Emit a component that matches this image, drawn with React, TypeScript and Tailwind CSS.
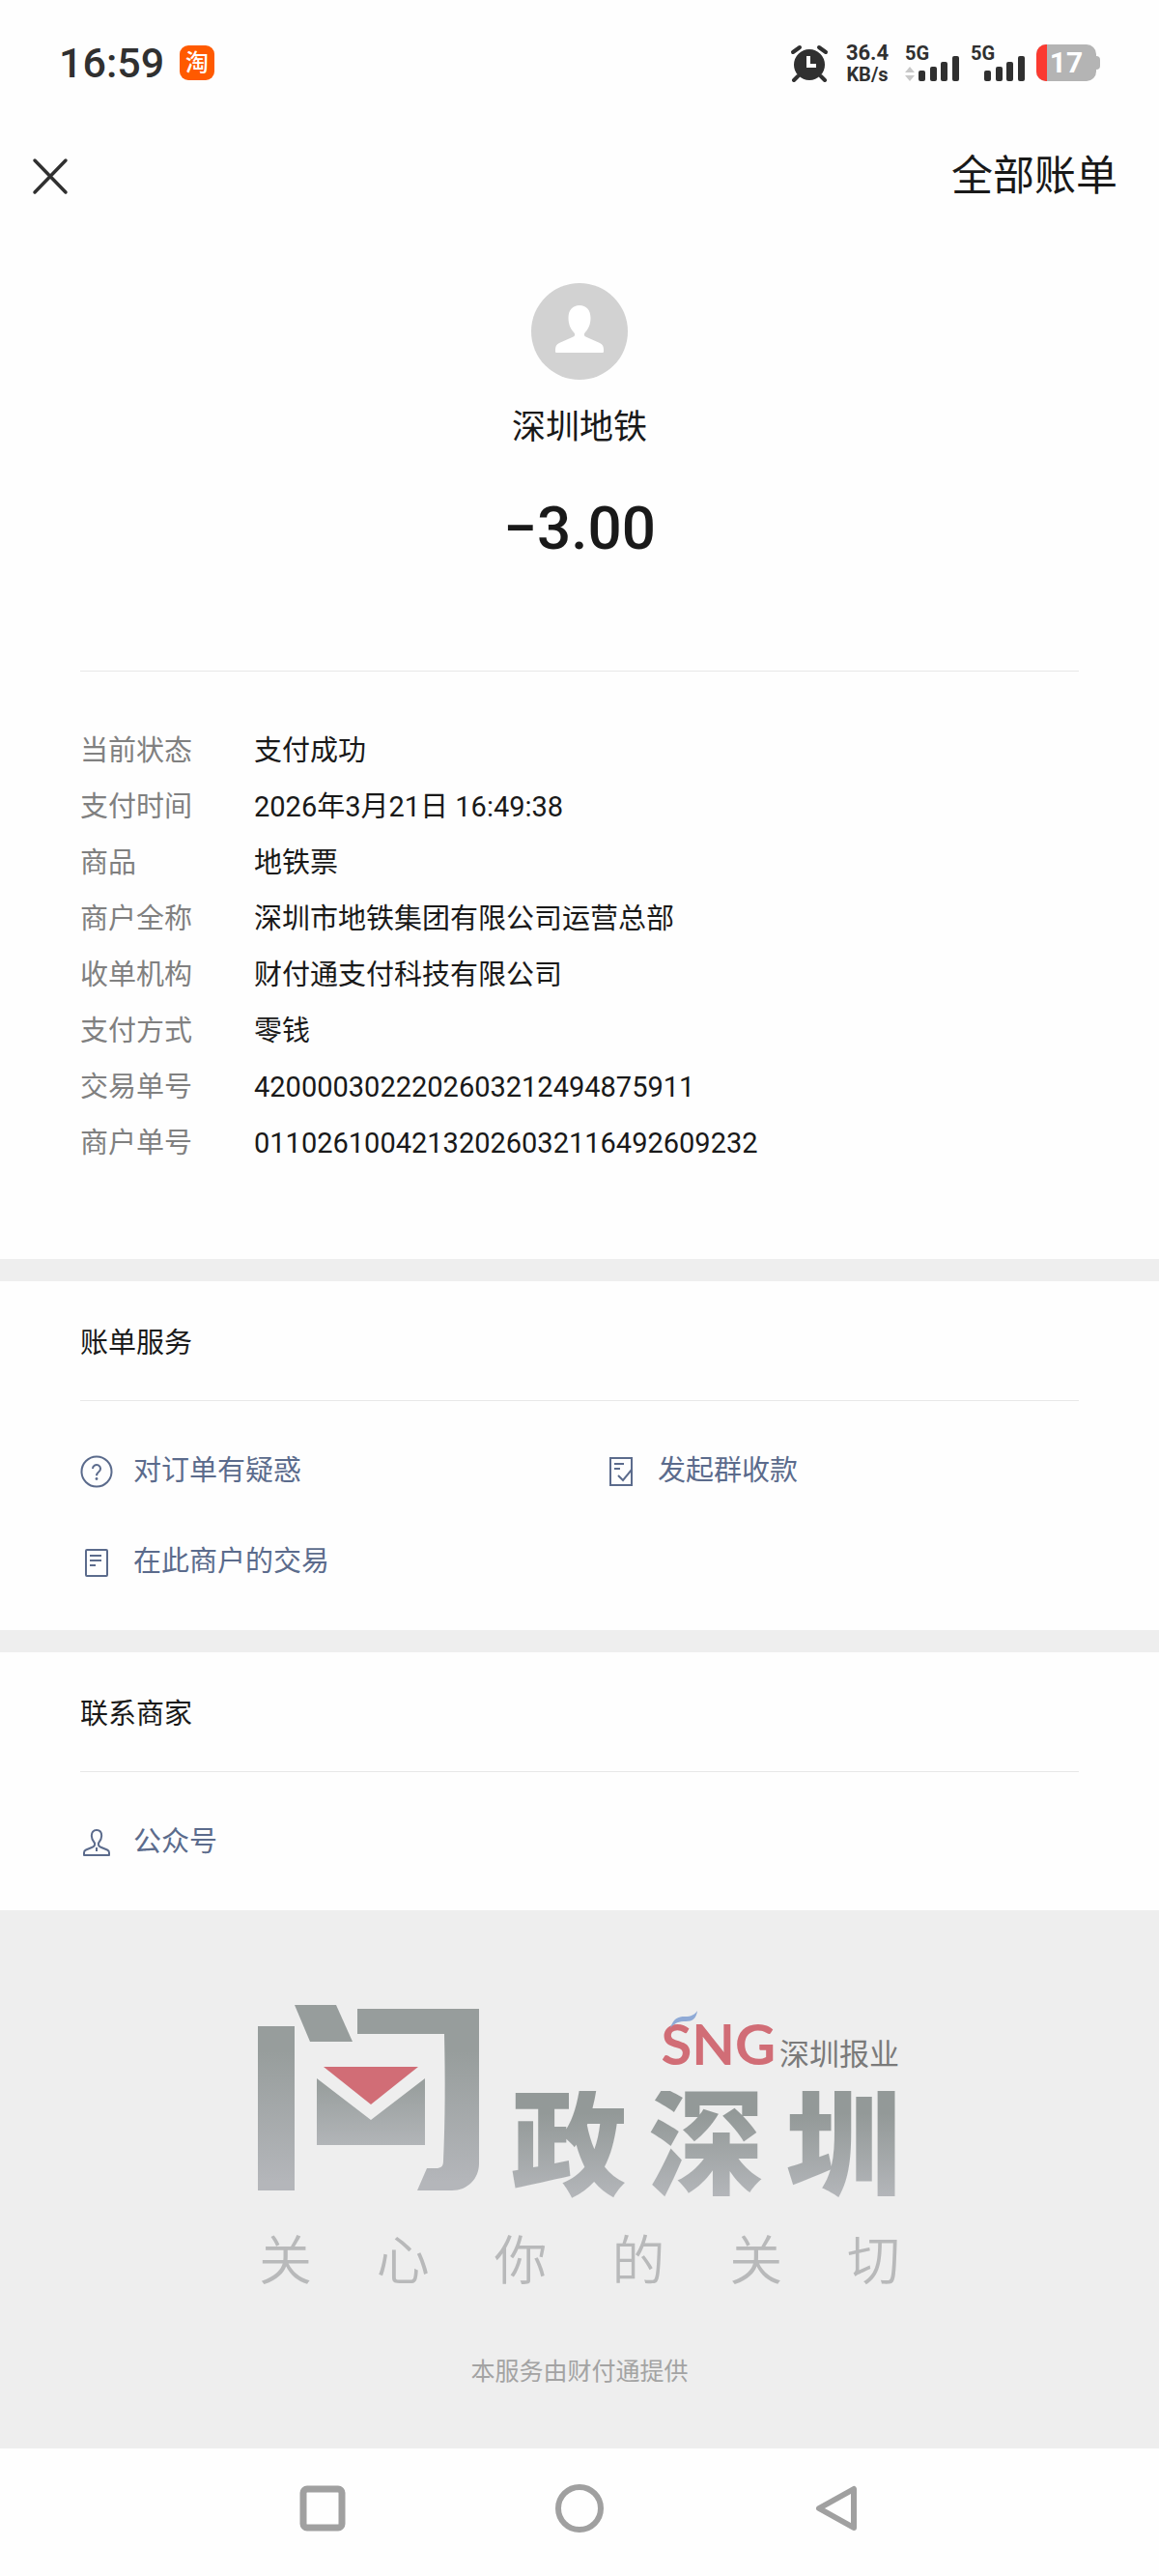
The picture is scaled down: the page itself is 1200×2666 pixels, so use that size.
import type { ReactNode } from 'react'

interface DetailRow {
  label: string
  value: string
}

interface ServiceLinkProps {
  icon: ReactNode
  children: ReactNode
}

const details: DetailRow[] = [
  { label: '当前状态', value: '支付成功' },
  { label: '支付时间', value: '2026年3月21日 16:49:38' },
  { label: '商品', value: '地铁票' },
  { label: '商户全称', value: '深圳市地铁集团有限公司运营总部' },
  { label: '收单机构', value: '财付通支付科技有限公司' },
  { label: '支付方式', value: '零钱' },
  { label: '交易单号', value: '4200003022202603212494875911' },
  { label: '商户单号', value: '01102610042132026032116492609232' },
]

const slogan = ['关', '心', '你', '的', '关', '切']

function AlarmIcon() {
  return (
    <svg className="h-10 w-10" viewBox="0 0 40 40" fill="none" aria-hidden="true">
      <circle cx="20" cy="22" r="16" fill="#303030" />
      <path d="M3 9l7-5M37 9l-7-5" stroke="#303030" strokeWidth="4" strokeLinecap="round" />
      <path d="M8 34l-4 4M32 34l4 4" stroke="#303030" strokeWidth="4" strokeLinecap="round" />
      <path d="M19 13v10h8" stroke="#fff" strokeWidth="4" />
    </svg>
  )
}

function Signal({ transfer = false }: { transfer?: boolean }) {
  return (
    <div className="relative h-10 w-14">
      <span className="absolute top-0 left-0 text-[20px] leading-5 font-bold">5G</span>
      <svg className="h-10 w-14" viewBox="0 0 56 40" fill="#303030" aria-hidden="true">
        {transfer && <path d="M0 30l5-6 5 6zM0 33l5 6 5-6z" fill="#c8c8c8" />}
        <rect x="14" y="28" width="7" height="11" rx="2" />
        <rect x="26" y="24" width="7" height="15" rx="2" />
        <rect x="37" y="19" width="7" height="20" rx="2" />
        <rect x="49" y="13" width="7" height="26" rx="2" />
      </svg>
    </div>
  )
}

function Battery() {
  return (
    <div className="flex items-center">
      <div className="relative flex h-[38px] w-[62px] items-center justify-center overflow-hidden rounded-[10px] bg-[#b4b4b4]">
        <div className="absolute inset-y-0 left-0 w-[11px] bg-[#fb3a30]" />
        <span className="text-[30px] leading-8 font-bold text-white">17</span>
      </div>
      <div className="h-[14px] w-1 rounded-r-sm bg-[#b4b4b4]" />
    </div>
  )
}

function QuestionIcon() {
  return (
    <svg className="h-[34px] w-[34px]" viewBox="0 0 34 34" fill="none" stroke="currentColor" strokeWidth="2" aria-hidden="true">
      <circle cx="17" cy="17" r="15.5" />
      <path d="M13 14a4 4 0 1 1 6.300 3.200c-1.600 1.100-2.300 2-2.300 4" />
      <circle cx="17" cy="24.5" r="1.4" fill="currentColor" stroke="none" />
    </svg>
  )
}

function GroupBillIcon() {
  return (
    <svg className="h-[34px] w-[34px]" viewBox="0 0 34 34" fill="none" stroke="currentColor" strokeWidth="2" aria-hidden="true">
      <path d="M28 18V3H6v28h22V18" />
      <path d="M10 9h10M10 14h6" />
      <path d="M14 21l5 5 9-11" />
    </svg>
  )
}

function BillIcon() {
  return (
    <svg className="h-[34px] w-[34px]" viewBox="0 0 34 34" fill="none" stroke="currentColor" strokeWidth="2" aria-hidden="true">
      <rect x="6" y="4" width="22" height="27" rx="1" />
      <path d="M10 10h12M10 15h12M10 20h6" />
    </svg>
  )
}

function AccountIcon() {
  return (
    <svg className="h-[34px] w-[34px]" viewBox="0 0 34 34" fill="none" stroke="currentColor" strokeWidth="2" strokeLinejoin="round" aria-hidden="true">
      <path d="M17 4c-3.300 0-5.200 2.500-5.200 6 0 3.600 1.500 5.600 3.200 7.500.6 2.500-.6 3.600-3 4.500l-6 2.500c-1.300.6-2 1.500-2 3V30h26v-2.500c0-1.500-.7-2.400-2-3L22 22c-2.400-.9-3.600-2-3-4.500 1.700-1.900 3.200-3.900 3.200-7.500 0-3.500-1.900-6-5.200-6z" />
      <path d="M17 22v4" />
    </svg>
  )
}

function ServiceLink({ icon, children }: ServiceLinkProps) {
  return (
    <a href="#" className="flex h-[58px] items-center gap-[21px] text-[29px] text-[#5b6b8c]">
      {icon}
      <span>{children}</span>
    </a>
  )
}

// 门框加信封的图形标志
function MailMark() {
  return (
    <svg className="h-[194px] w-[230px]" viewBox="0 0 230 194" role="img" aria-label="问">
      <defs>
        <linearGradient id="frame" gradientUnits="userSpaceOnUse" x1="0" y1="0" x2="0" y2="194">
          <stop offset="0.25" stopColor="#979d9c" />
          <stop offset="0.95" stopColor="#b4b6ba" />
        </linearGradient>
        <linearGradient id="envelope" x1="0" y1="0" x2="0" y2="1">
          <stop offset="0.1" stopColor="#999f9e" />
          <stop offset="1" stopColor="#b2b5b8" />
        </linearGradient>
      </defs>
      <g fill="url(#frame)">
        <path d="M0 23h38v170H0z" />
        <path d="M38 1h43l17 38H54z" />
        <path d="M103 5h126v160c0 16-12 28-28 28h-36l10-23h9c6 0 8-2 8-8 2-43 2-85 1-131h-90z" />
      </g>
      <path d="M61 77l56 43 56-43v69H61z" fill="url(#envelope)" />
      <path d="M68 65h98l-49 39z" fill="#d16d76" />
    </svg>
  )
}

function Sponsor() {
  return (
    <div className="flex items-baseline justify-end gap-1 pr-0.5">
      <span className="relative font-[Lato] text-[58px] leading-[54px] font-bold text-[#d16d76]">
        SNG
        <svg className="absolute -top-2 left-2 h-5 w-8" viewBox="0 0 32 20" aria-hidden="true">
          <path d="M2 19C5 9 10 7 17 7c7 0 10-2 13-6-1 8-5 11-12 11-7 0-11 1-16 7z" fill="#8faad6" />
        </svg>
      </span>
      <span className="text-[31px] leading-[54px] text-[#7a7a7a]">深圳报业</span>
    </div>
  )
}

export default function App() {
  return (
    <div className="min-h-screen bg-[#fefefe] font-[Roboto,'Noto_Sans_CJK_SC',sans-serif] text-[#191919]">
      <div className="flex h-[130px] items-center justify-between px-[61px] text-[#303030]">
        <div className="flex items-center gap-4">
          <span className="text-[43px] leading-none font-medium">16:59</span>
          <span className="flex h-9 w-9 items-center justify-center rounded-[9px] bg-[#ff5a00] text-[24px] leading-none font-medium text-white">
            淘
          </span>
        </div>
        <div className="flex items-center">
          <AlarmIcon />
          <div className="mr-[15px] ml-4 flex w-12 flex-col items-center font-bold">
            <span className="text-[22px] leading-6">36.4</span>
            <span className="text-[20px] leading-5">KB/s</span>
          </div>
          <div className="mr-3 flex gap-3">
            <Signal transfer />
            <Signal />
          </div>
          <Battery />
        </div>
      </div>

      <header className="flex h-[100px] items-center justify-between pt-[3px] pr-[43px] pl-[32px]">
        <button type="button" aria-label="关闭">
          <svg className="h-10 w-10" viewBox="0 0 40 40" stroke="#303030" strokeWidth="3.500" strokeLinecap="round" aria-hidden="true">
            <path d="M4 4l32 33M36 4L4 37" />
          </svg>
        </button>
        <button type="button" className="text-[43px] leading-[60px]">全部账单</button>
      </header>

      <main>
        <section className="px-[83px] pt-[63px] pb-[91px]">
          <div className="flex flex-col items-center">
            <svg className="h-[100px] w-[100px]" viewBox="0 0 100 100" aria-hidden="true">
              <circle cx="50" cy="50" r="50" fill="#d2d2d2" />
              <path
                d="M50 23c-7 0-11.500 5-11.500 13 0 7 2.500 11.500 6 15.500 1.500 2 .5 3.500-2 4.500L29 62c-3 1.500-4 3.500-4 7v1.500c0 1 .5 1.500 1.500 1.500h47c1 0 1.500-.5 1.500-1.500V69c0-3.500-1-5.500-4-7l-13.500-6c-2.500-1-3.500-2.500-2-4.500 3.500-4 6-8.500 6-15.500 0-8-4.500-13-11.500-13z"
                fill="#fff"
              />
            </svg>
            <h1 className="mt-[25px] text-[35px] leading-[50px]">深圳地铁</h1>
            <p className="mt-[39px] text-[62px] leading-[80px] font-medium">−3.00</p>
          </div>

          <dl className="mt-[107px] border-t border-[#e8e8e8] pt-[53px] text-[29px] leading-[58px]">
            {details.map(({ label, value }) => (
              <div key={label} className="flex">
                <dt className="w-[180px] shrink-0 text-[#808080]">{label}</dt>
                <dd>{value}</dd>
              </div>
            ))}
          </dl>
        </section>

        <section className="border-t-[23px] border-[#eeeeee] px-[83px] pb-[41px]">
          <h2 className="border-b border-[#e8e8e8] pt-[35px] pb-[30px] text-[29px] leading-[58px]">账单服务</h2>
          <div className="grid grid-cols-[543px_1fr] gap-y-[36px] pt-[44px]">
            <ServiceLink icon={<QuestionIcon />}>对订单有疑惑</ServiceLink>
            <ServiceLink icon={<GroupBillIcon />}>发起群收款</ServiceLink>
            <ServiceLink icon={<BillIcon />}>在此商户的交易</ServiceLink>
          </div>
        </section>

        <section className="border-t-[23px] border-[#eeeeee] px-[83px] pb-[41px]">
          <h2 className="border-b border-[#e8e8e8] pt-[35px] pb-[30px] text-[29px] leading-[58px]">联系商家</h2>
          <div className="pt-[44px]">
            <ServiceLink icon={<AccountIcon />}>公众号</ServiceLink>
          </div>
        </section>

        <section className="flex flex-col items-center bg-[#eeeeee] pt-[97px] pb-[59px]">
          <div className="flex items-end gap-[32px]">
            <MailMark />
            <div className="-mb-3 flex w-[404px] flex-col">
              <Sponsor />
              <div className="mt-[10px] flex justify-between bg-linear-to-b from-[#939998] from-20% to-[#b6b8bc] bg-clip-text text-[120px] leading-[116px] font-black text-transparent">
                <span>政</span>
                <span>深</span>
                <span>圳</span>
              </div>
            </div>
          </div>
          <div className="mt-[37px] flex w-[664px] justify-between text-[55px] leading-[70px] font-[350] text-[#b8b9ba]">
            {slogan.map((char, i) => (
              <span key={i}>{char}</span>
            ))}
          </div>
          <p className="mt-[60px] text-[25px] leading-10 text-[#a3a3a3]">本服务由财付通提供</p>
        </section>
      </main>

      <nav className="flex h-[132px] items-center justify-center gap-[216px] pb-2" aria-label="系统导航">
        <button type="button" aria-label="最近任务">
          <svg className="h-[50px] w-[50px]" viewBox="0 0 50 50" fill="none" stroke="#a0a0a0" strokeWidth="7" aria-hidden="true">
            <rect x="5" y="5" width="40" height="40" rx="4" />
          </svg>
        </button>
        <button type="button" aria-label="主屏幕">
          <svg className="h-[50px] w-[50px]" viewBox="0 0 50 50" fill="none" stroke="#a0a0a0" strokeWidth="6" aria-hidden="true">
            <circle cx="25" cy="25" r="22" />
          </svg>
        </button>
        <button type="button" aria-label="返回">
          <svg className="h-[50px] w-[50px]" viewBox="0 0 50 50" fill="none" stroke="#a0a0a0" strokeWidth="6" strokeLinejoin="round" aria-hidden="true">
            <path d="M43 5v40L7 25z" />
          </svg>
        </button>
      </nav>
    </div>
  )
}
